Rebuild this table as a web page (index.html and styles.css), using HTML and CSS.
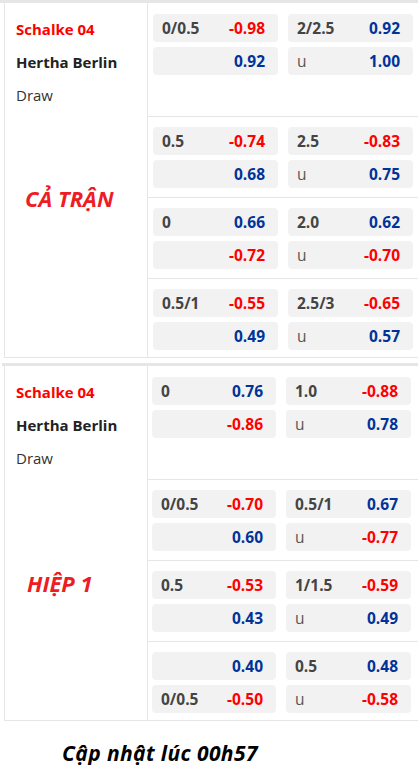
FILE: index.html
```html
<!DOCTYPE html>
<html lang="vi">
<head>
<meta charset="utf-8">
<title>Odds</title>
<link rel="stylesheet" href="styles.css">
</head>
<body>
<div class="band band-top"></div>
<section class="match">
  <div class="left">
    <div class="teams">
      <div class="home">Schalke 04</div>
      <div class="away">Hertha Berlin</div>
      <div class="draw">Draw</div>
    </div>
    <div class="label label-full">CẢ TRẬN</div>
  </div>
  <div class="right">
    <div class="row row-first">
      <div class="cell"><span class="line">0/0.5</span><span class="red">-0.98</span></div>
      <div class="cell"><span class="line">2/2.5</span><span class="blue">0.92</span></div>
      <div class="cell"><span class="line"></span><span class="blue">0.92</span></div>
      <div class="cell"><span class="u">u</span><span class="blue">1.00</span></div>
    </div>
    <div class="row">
      <div class="cell"><span class="line">0.5</span><span class="red">-0.74</span></div>
      <div class="cell"><span class="line">2.5</span><span class="red">-0.83</span></div>
      <div class="cell"><span class="line"></span><span class="blue">0.68</span></div>
      <div class="cell"><span class="u">u</span><span class="blue">0.75</span></div>
    </div>
    <div class="row">
      <div class="cell"><span class="line">0</span><span class="blue">0.66</span></div>
      <div class="cell"><span class="line">2.0</span><span class="blue">0.62</span></div>
      <div class="cell"><span class="line"></span><span class="red">-0.72</span></div>
      <div class="cell"><span class="u">u</span><span class="red">-0.70</span></div>
    </div>
    <div class="row row-last">
      <div class="cell"><span class="line">0.5/1</span><span class="red">-0.55</span></div>
      <div class="cell"><span class="line">2.5/3</span><span class="red">-0.65</span></div>
      <div class="cell"><span class="line"></span><span class="blue">0.49</span></div>
      <div class="cell"><span class="u">u</span><span class="blue">0.57</span></div>
    </div>
  </div>
</section>
<div class="band band-mid"></div>
<section class="match match-half">
  <div class="left">
    <div class="teams">
      <div class="home">Schalke 04</div>
      <div class="away">Hertha Berlin</div>
      <div class="draw">Draw</div>
    </div>
    <div class="label label-half">HIỆP 1</div>
  </div>
  <div class="right">
    <div class="row row-first">
      <div class="cell"><span class="line">0</span><span class="blue">0.76</span></div>
      <div class="cell"><span class="line">1.0</span><span class="red">-0.88</span></div>
      <div class="cell"><span class="line"></span><span class="red">-0.86</span></div>
      <div class="cell"><span class="u">u</span><span class="blue">0.78</span></div>
    </div>
    <div class="row">
      <div class="cell"><span class="line">0/0.5</span><span class="red">-0.70</span></div>
      <div class="cell"><span class="line">0.5/1</span><span class="blue">0.67</span></div>
      <div class="cell"><span class="line"></span><span class="blue">0.60</span></div>
      <div class="cell"><span class="u">u</span><span class="red">-0.77</span></div>
    </div>
    <div class="row">
      <div class="cell"><span class="line">0.5</span><span class="red">-0.53</span></div>
      <div class="cell"><span class="line">1/1.5</span><span class="red">-0.59</span></div>
      <div class="cell"><span class="line"></span><span class="blue">0.43</span></div>
      <div class="cell"><span class="u">u</span><span class="blue">0.49</span></div>
    </div>
    <div class="row row-last">
      <div class="cell"><span class="line"></span><span class="blue">0.40</span></div>
      <div class="cell"><span class="line">0.5</span><span class="blue">0.48</span></div>
      <div class="cell"><span class="line">0/0.5</span><span class="red">-0.50</span></div>
      <div class="cell"><span class="u">u</span><span class="red">-0.58</span></div>
    </div>
  </div>
</section>
<p class="updated">Cập nhật lúc 00h57</p>
</body>
</html>
```

FILE: styles.css
```css
* { box-sizing: border-box; }
html, body { margin: 0; padding: 0; background: #fff; }
body {
  font-family: "Open Sans", "Noto Sans", sans-serif;
  font-size: 15px;
  color: #333;
  width: 418px;
  overflow: hidden;
}
.band { height: 3px; background: #e6e6e6; }
.band-mid { margin: 5px 0 0 2px; }

.match {
  display: flex;
  margin-left: 4px;
  border-left: 1px solid #e6e6e6;
  border-bottom: 1px solid #e6e6e6;
}
.left {
  width: 143px;
  flex: none;
  border-right: 1px solid #e6e6e6;
}
.teams {
  padding: 10px 0 0 11px;
  height: 114px;
  line-height: 33px;
}
.home { color: #ff0000; font-weight: 700; }
.away { color: #222; font-weight: 700; }
.draw { color: #333; font-weight: 400; }
.label {
  font-style: italic;
  font-weight: 700;
  font-size: 22px;
  color: #ee1c25;
  line-height: 30px;
}
.label-full { padding: 66px 0 0 20px; }
.label-half { padding: 88px 0 0 22px; }

.right { flex: 1; }
.row {
  display: grid;
  grid-template-columns: 125px 125px;
  grid-auto-rows: 28px;
  column-gap: 10px;
  row-gap: 5px;
  align-content: start;
  padding: 10px 0 0 5px;
  height: 81px;
  border-bottom: 1px solid #e6e6e6;
}
.row-first { height: 114px; padding-top: 11px; }
.row-last { height: 78px; border-bottom: none; }
.match-half .row { grid-template-columns: 124px 125px; padding-left: 4px; }

.cell {
  display: flex;
  align-items: center;
  justify-content: space-between;
  background: #f2f2f2;
  border-radius: 4px;
  padding: 0 13px 0 9px;
  font-weight: 700;
  font-size: 15.5px;
}
.line { color: #444; }
.u { color: #555; font-weight: 400; }
.red { color: #ff0000; }
.blue { color: #003399; }

.updated {
  margin: 20px 0 0 62px;
  font-style: italic;
  font-weight: 700;
  font-size: 21px;
  letter-spacing: 0.4px;
  color: #000;
  line-height: 24px;
}
```
